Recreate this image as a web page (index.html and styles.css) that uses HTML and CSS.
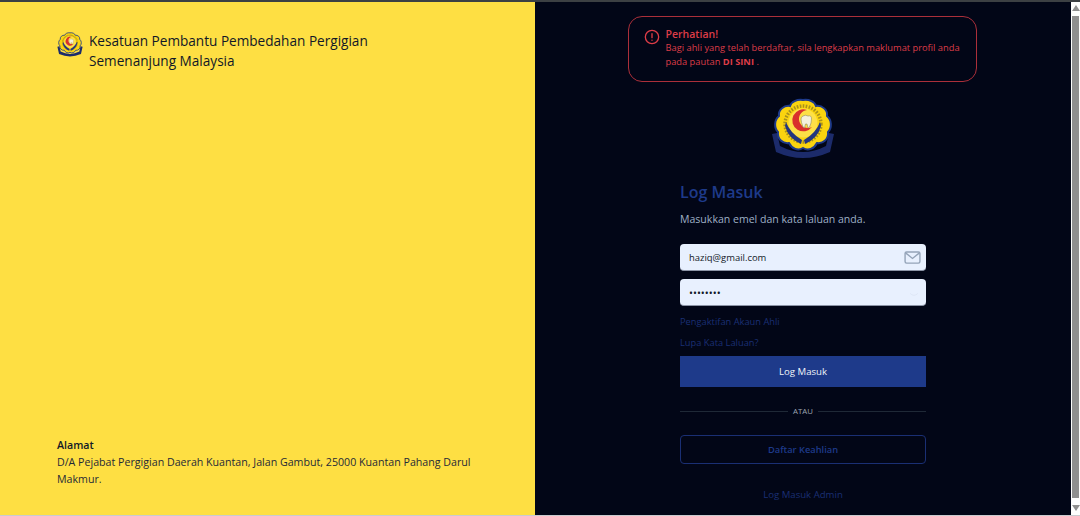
FILE: index.html
```html
<!DOCTYPE html>
<html lang="ms">
<head>
    <meta charset="UTF-8">
    <meta name="viewport" content="width=device-width, initial-scale=1.0">
    <title>Log Masuk</title>
    <link rel="stylesheet" href="styles.css">
</head>
<body>
    <svg class="defs" width="0" height="0" aria-hidden="true">
        <symbol id="crest" viewBox="0 0 64 64">
            <path d="M1 36 L6 35 L9 48 Q32 60 55 48 L58 35 L63 36 L59 54 Q32 66 5 54 Z" fill="#1c2b6b"/>
            <path d="M32 2 C38 1 44 4 45 8 C51 7 57 12 56 18 C61 22 61 30 57 34 C58 41 52 46 46 45 C43 51 37 53 32 50 C27 53 21 51 18 45 C12 46 6 41 7 34 C3 30 3 22 8 18 C7 12 13 7 19 8 C20 4 26 1 32 2 Z" fill="#fad40f" stroke="#1e3a8a" stroke-width="2"/>
            <circle cx="32" cy="26" r="18" fill="none" stroke="#a8901c" stroke-width="3.4" stroke-dasharray="1.6 1.4"/>
            <circle cx="32" cy="25" r="14.5" fill="#fde047"/>
            <path d="M36 12 A11 11 0 1 0 41 29 A9 9 0 1 1 36 12 Z" fill="#d9302c"/>
            <path d="M32 18 Q34.500 16.500 37 18 Q40.500 17 40.500 21 Q40.500 25 38.500 29 L37 30 L36 26 L34.500 26 L33.500 30 L32 29 Q30 24 30 21 Q30 19 32 18 Z" fill="#f4f1dc" stroke="#8f8a60" stroke-width=".6"/>
            <path d="M15 24 Q19 35 31 42 L30 46 Q17 40 14 28 Z M49 24 Q45 35 33 42 L34 46 Q47 40 50 28 Z" fill="#24367f"/>
        </symbol>
    </svg>

    <div class="top-line"></div>
    <div class="window">
        <main class="page">
            <section class="side">
                <header class="brand">
                    <svg class="brand-logo"><use href="#crest"/></svg>
                    <h1>Kesatuan Pembantu Pembedahan Pergigian Semenanjung Malaysia</h1>
                </header>
                <footer class="address">
                    <strong>Alamat</strong>
                    <p>D/A Pejabat Pergigian Daerah Kuantan, Jalan Gambut, 25000 Kuantan Pahang Darul Makmur.</p>
                </footer>
            </section>

            <section class="login">
                <div class="alert">
                    <svg class="alert-icon" viewBox="0 0 24 24" fill="none" stroke="currentColor" stroke-width="2" stroke-linecap="round">
                        <circle cx="12" cy="12" r="10"/>
                        <path d="M12 7v6"/>
                        <path d="M12 16.600v.4"/>
                    </svg>
                    <div>
                        <h2>Perhatian!</h2>
                        <p>Bagi ahli yang telah berdaftar, sila lengkapkan maklumat profil anda pada pautan <b>DI SINI</b> .</p>
                    </div>
                </div>

                <svg class="crest"><use href="#crest"/></svg>

                <form class="login-form">
                    <h2>Log Masuk</h2>
                    <p class="lead">Masukkan emel dan kata laluan anda.</p>

                    <div class="field first">
                        <input type="text" value="haziq@gmail.com">
                        <svg class="field-icon" viewBox="0 0 18 14" fill="none" stroke="#94a3b8" stroke-width="1.5">
                            <rect x="1" y="1" width="16" height="12" rx="1.6"/>
                            <path d="M1.500 2 L9 8 L16.500 2"/>
                        </svg>
                    </div>
                    <div class="field">
                        <input class="secret" type="password" value="password">
                        <svg class="field-icon faint" viewBox="0 0 18 14" fill="none" stroke="#dbe4f3" stroke-width="1.4">
                            <path d="M2 5 Q9 12 16 5"/>
                        </svg>
                    </div>

                    <a class="link" href="#">Pengaktifan Akaun Ahli</a>
                    <a class="link" href="#">Lupa Kata Laluan?</a>

                    <button class="btn-primary" type="button">Log Masuk</button>

                    <div class="divider"><span>ATAU</span></div>

                    <a class="btn-outline" href="#">Daftar Keahlian</a>
                    <a class="admin" href="#">Log Masuk Admin</a>
                </form>
            </section>
        </main>

        <div class="scrollbar">
            <span class="arrow up"></span>
            <span class="thumb"></span>
            <span class="arrow down"></span>
        </div>
    </div>
    <div class="bottom-line"></div>
</body>
</html>
```

FILE: styles.css
```css
/* General Styles */
* {
    box-sizing: border-box;
}

html, body {
    height: 100%;
    margin: 0;
    overflow: hidden;
}

body {
    display: flex;
    flex-direction: column;
    font-family: "Open Sans", "Noto Sans", sans-serif;
    background-color: #020617;
}

.defs {
    position: absolute;
}

.top-line {
    height: 2px;
    flex: none;
    background-color: #3c4043;
}

.bottom-line {
    height: 1px;
    flex: none;
    background-color: #c9cbcf;
}

.window {
    flex: 1;
    min-height: 0;
    display: flex;
}

.page {
    flex: 1;
    display: flex;
    min-width: 0;
}

/* Scrollbar */
.scrollbar {
    width: 9px;
    flex: none;
    background-color: #fdfdfd;
    display: flex;
    flex-direction: column;
    align-items: center;
    padding: 3px 0 4px;
}

.thumb {
    flex: 1;
    width: 7px;
    margin: 5px 0 7px;
    background-color: #8f8f8f;
}

.arrow {
    width: 0;
    height: 0;
    border-left: 4px solid transparent;
    border-right: 4px solid transparent;
}

.arrow.up {
    border-bottom: 6px solid #8f8f8f;
}

.arrow.down {
    border-top: 6px solid #8f8f8f;
}

/* Left panel */
.side {
    width: 535px;
    flex: none;
    background-color: #fedf43;
    color: #111827;
    display: flex;
    flex-direction: column;
    justify-content: space-between;
    padding: 29px 57px 27px;
}

.brand {
    display: flex;
    align-items: flex-start;
    gap: 6px;
}

.brand-logo {
    width: 26px;
    height: 26px;
    flex: none;
    margin-top: 1px;
}

.brand h1 {
    margin: 0;
    width: 300px;
    font-size: 13.6px;
    line-height: 20px;
    font-weight: 500;
}

.address {
    font-size: 10.65px;
    line-height: 17px;
}

.address strong {
    display: block;
    font-weight: 600;
}

.address p {
    margin: 0;
    color: #1f2937;
}

/* Right panel */
.login {
    flex: 1;
    display: flex;
    flex-direction: column;
    align-items: center;
    padding-top: 14px;
    min-width: 0;
}

.alert {
    width: 349px;
    height: 66px;
    flex: none;
    display: flex;
    align-items: flex-start;
    gap: 6px;
    margin-right: 2px;
    padding: 10px 10px 0 15px;
    border: 1px solid #ab2f3a;
    border-radius: 14px;
    color: #dd3c47;
}

.alert-icon {
    width: 16px;
    height: 16px;
    flex: none;
    margin-top: 2px;
}

.alert h2 {
    margin: 0;
    font-size: 10.5px;
    line-height: 14px;
    font-weight: 600;
}

.alert p {
    margin: 0;
    font-size: 9.3px;
    line-height: 14px;
}

.alert b {
    font-weight: 700;
}

.crest {
    width: 64px;
    height: 64px;
    flex: none;
    margin-top: 16px;
}

.login-form {
    width: 246px;
    display: flex;
    flex-direction: column;
    margin-top: 19px;
}

.login-form h2 {
    margin: 0;
    font-size: 16px;
    line-height: 22px;
    font-weight: 600;
    color: #1e3a8a;
}

.lead {
    margin: 8px 0 0;
    font-size: 10.55px;
    line-height: 16px;
    color: #9fb0c6;
}

.field {
    position: relative;
    margin-top: 8px;
}

.field.first {
    margin-top: 17px;
}

.field input {
    display: block;
    width: 100%;
    height: 27px;
    padding: 1px 36px 0 9px;
    border: none;
    border-bottom: 1px solid #8b93a5;
    border-radius: 4px;
    background-color: #e8f0fe;
    color: #111827;
    font-family: inherit;
    font-size: 9.45px;
}

.field input.secret {
    font-size: 10.5px;
}

.field-icon {
    position: absolute;
    top: 7px;
    right: 5px;
    width: 17px;
    height: 13px;
}

.field-icon.faint {
    width: 10px;
    top: 9px;
    right: 7px;
}

.link {
    font-size: 9.3px;
    line-height: 14px;
    color: #1a2f74;
    text-decoration: none;
    margin-top: 9px;
}

.link + .link {
    margin-top: 7px;
}

.btn-primary {
    height: 31px;
    margin-top: 6px;
    border: none;
    background-color: #1e3a8a;
    color: #f1f5f9;
    font-family: inherit;
    font-size: 9.6px;
}

.divider {
    display: flex;
    align-items: center;
    gap: 5px;
    margin-top: 17px;
    font-size: 7.8px;
    line-height: 14px;
    color: #9ca3af;
}

.divider::before,
.divider::after {
    content: "";
    flex: 1;
    height: 1px;
    background-color: #1f2937;
}

.btn-outline {
    height: 29px;
    margin-top: 17px;
    display: flex;
    align-items: center;
    justify-content: center;
    border: 1px solid #1a2f74;
    border-radius: 4px;
    color: #1e3a8a;
    font-size: 9.3px;
    font-weight: 600;
    text-decoration: none;
}

.admin {
    margin-top: 24px;
    text-align: center;
    font-size: 9.6px;
    line-height: 14px;
    color: #1a2f74;
    text-decoration: none;
}
```
